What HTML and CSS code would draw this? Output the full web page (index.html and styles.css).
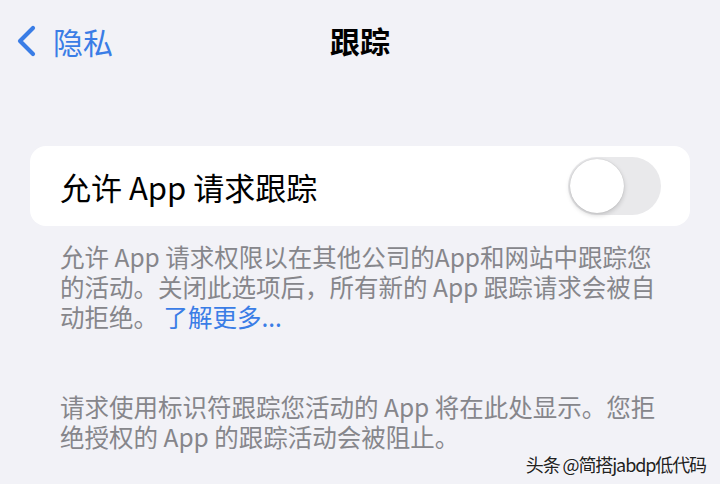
FILE: index.html
```html
<!DOCTYPE html>
<html>
	<head>
		<meta charset="utf-8">
		<title>跟踪</title>
		<link rel="stylesheet" href="styles.css">
	</head>
	<body>
		<div class="page">
			<div class="navBar">
				<a class="backBtn">
					<svg class="chevron" width="22" height="32" viewBox="0 0 22 32">
						<path d="M18 3 L5 16 L18 29" fill="none" stroke="#3a7de6" stroke-width="4.2" stroke-linecap="round" stroke-linejoin="round"/>
					</svg>
					<span>隐私</span>
				</a>
				<div class="navTitle">跟踪</div>
				<div></div>
			</div>

			<div class="group">
				<span class="rowLabel">允许 App 请求跟踪</span>
				<div class="switch"><div class="knob"></div></div>
			</div>
			<p class="groupFooter">允许 App 请求权限以在其他公司的App和网站中跟踪您的活动。关闭此选项后，所有新的 App 跟踪请求会被自动拒绝。 <a class="link">了解更多...</a></p>

			<p class="note">请求使用标识符跟踪您活动的 App 将在此处显示。您拒绝授权的 App 的跟踪活动会被阻止。</p>

			<div class="watermark">头条 @简搭jabdp低代码</div>
		</div>
	</body>
</html>
```

FILE: styles.css
```css
body{
	margin: 0;
	padding: 0;
	background-color: #f2f2f7;
	font-family: "Noto Sans CJK SC", "Noto Sans", sans-serif;
}
.page{
	position: relative;
	width: 720px;
	height: 484px;
	overflow: hidden;
}
.navBar{
	height: 80px;
	display: grid;
	grid-template-columns: 1fr auto 1fr;
	align-items: center;
}
.backBtn{
	display: flex;
	align-items: center;
	padding-left: 15px;
	color: #3a7de6;
	font-size: 30px;
	margin-top: 1px;
}
.chevron{
	margin-right: 16px;
}
.navTitle{
	font-size: 30px;
	font-weight: bold;
	color: #000;
}
.group{
	margin: 66px 30px 0 30px;
	height: 80px;
	background-color: #fff;
	border-radius: 16px;
	display: flex;
	align-items: center;
	justify-content: space-between;
	padding: 0 29px 0 30px;
}
.rowLabel{
	font-size: 31px;
	color: #000;
}
.switch{
	width: 93px;
	height: 58px;
	border-radius: 29px;
	background-color: #e9e9eb;
	display: flex;
	align-items: center;
	padding-left: 2px;
	box-sizing: border-box;
}
.knob{
	width: 54px;
	height: 54px;
	border-radius: 50%;
	background-color: #fff;
	box-shadow: 0 2px 5px rgba(0,0,0,0.18), 0 0 1px rgba(0,0,0,0.2);
}
.groupFooter, .note{
	margin: 0;
	padding: 0 52px 0 60px;
	font-size: 24.5px;
	line-height: 30px;
	color: #86868b;
}
.groupFooter{
	margin-top: 16px;
}
.note{
	margin-top: 60px;
}
.link{
	color: #3a7de6;
}
.watermark{
	position: absolute;
	right: 14px;
	bottom: 9px;
	font-size: 18px;
	line-height: 22px;
	letter-spacing: -1.1px;
	color: #222;
	text-shadow: 0 0 2px #fff;
}
```
